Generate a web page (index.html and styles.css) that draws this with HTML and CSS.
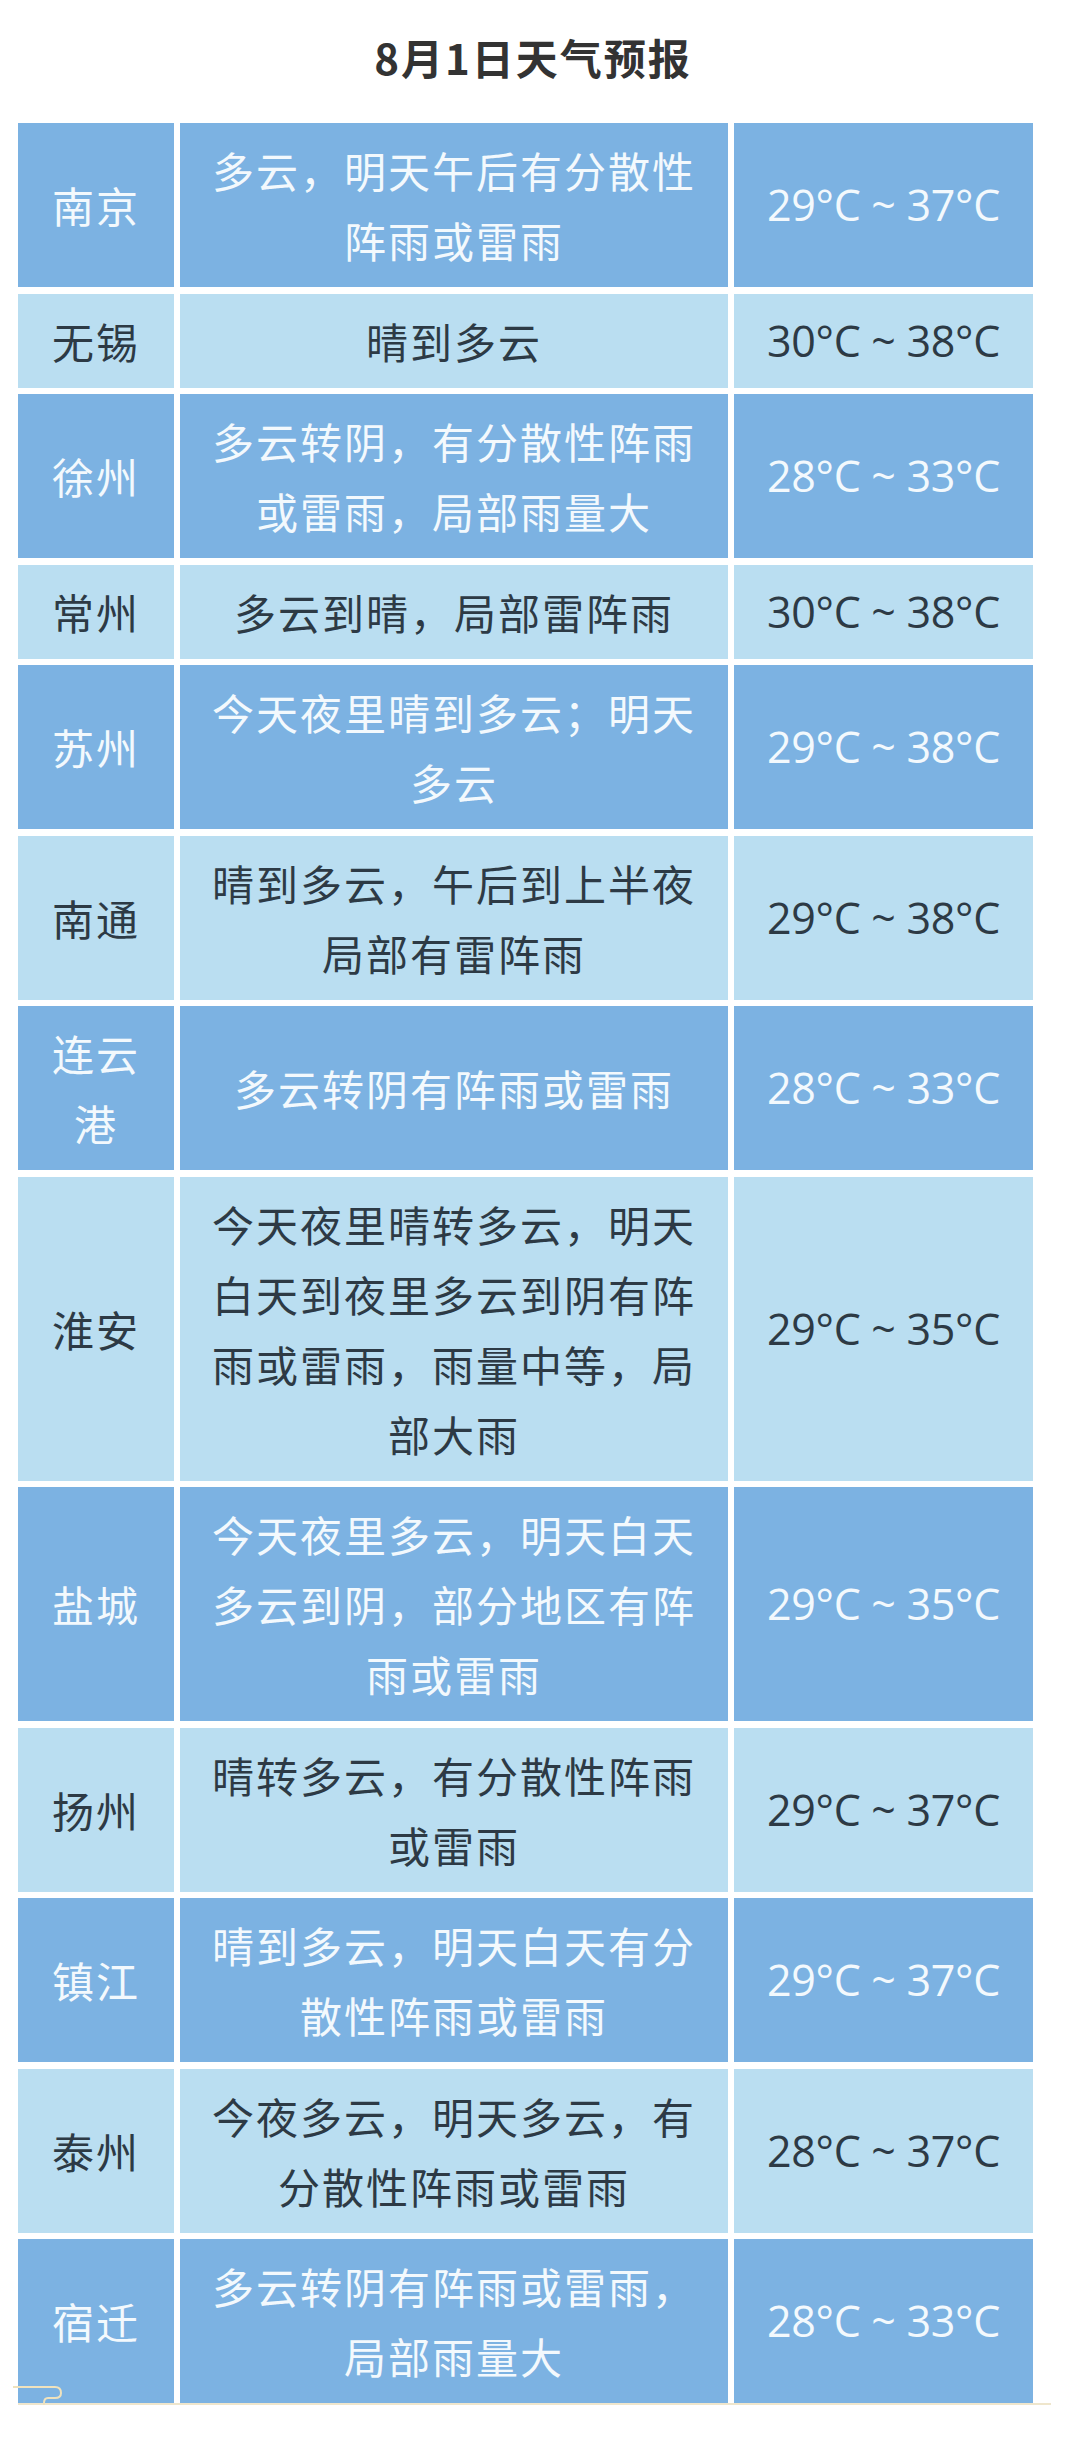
FILE: index.html
```html
<!DOCTYPE html>
<html lang="zh-CN">
<head>
<meta charset="utf-8">
<title>8月1日天气预报</title>
<link rel="stylesheet" href="styles.css">
</head>
<body>
<div class="page">
  <h1 class="title">8月1日天气预报</h1>
  <div class="table-wrap">
    <div class="table">
      <div class="row dark"><div class="cell name">南京</div><div class="cell desc">多云，明天午后有分散性阵雨或雷雨</div><div class="cell temp">29°C ~ 37°C</div></div>
      <div class="row light"><div class="cell name">无锡</div><div class="cell desc">晴到多云</div><div class="cell temp">30°C ~ 38°C</div></div>
      <div class="row dark"><div class="cell name">徐州</div><div class="cell desc">多云转阴，有分散性阵雨或雷雨，局部雨量大</div><div class="cell temp">28°C ~ 33°C</div></div>
      <div class="row light"><div class="cell name">常州</div><div class="cell desc">多云到晴，局部雷阵雨</div><div class="cell temp">30°C ~ 38°C</div></div>
      <div class="row dark"><div class="cell name">苏州</div><div class="cell desc">今天夜里晴到多云；明天多云</div><div class="cell temp">29°C ~ 38°C</div></div>
      <div class="row light"><div class="cell name">南通</div><div class="cell desc">晴到多云，午后到上半夜局部有雷阵雨</div><div class="cell temp">29°C ~ 38°C</div></div>
      <div class="row dark"><div class="cell name">连云港</div><div class="cell desc">多云转阴有阵雨或雷雨</div><div class="cell temp">28°C ~ 33°C</div></div>
      <div class="row light"><div class="cell name">淮安</div><div class="cell desc">今天夜里晴转多云，明天白天到夜里多云到阴有阵雨或雷雨，雨量中等，局部大雨</div><div class="cell temp">29°C ~ 35°C</div></div>
      <div class="row dark"><div class="cell name">盐城</div><div class="cell desc">今天夜里多云，明天白天多云到阴，部分地区有阵雨或雷雨</div><div class="cell temp">29°C ~ 35°C</div></div>
      <div class="row light"><div class="cell name">扬州</div><div class="cell desc">晴转多云，有分散性阵雨或雷雨</div><div class="cell temp">29°C ~ 37°C</div></div>
      <div class="row dark"><div class="cell name">镇江</div><div class="cell desc">晴到多云，明天白天有分散性阵雨或雷雨</div><div class="cell temp">29°C ~ 37°C</div></div>
      <div class="row light"><div class="cell name">泰州</div><div class="cell desc">今夜多云，明天多云，有分散性阵雨或雷雨</div><div class="cell temp">28°C ~ 37°C</div></div>
      <div class="row dark"><div class="cell name">宿迁</div><div class="cell desc">多云转阴有阵雨或雷雨，局部雨量大</div><div class="cell temp">28°C ~ 33°C</div></div>
    </div>
    <svg class="deco" width="60" height="24" viewBox="0 0 60 24" aria-hidden="true">
      <path d="M0 4 H42 Q48 4 48 10 Q48 15 42 15 H35 Q31 15 31 20 L31 22" fill="none" stroke="#efe2bd" stroke-width="2"/>
    </svg>
    <div class="baseline"></div>
  </div>
</div>
</body>
</html>
```
FILE: styles.css
```css
html, body {
  margin: 0;
  padding: 0;
  background: #ffffff;
}

.page {
  width: 1066px;
  padding-bottom: 56px;
}

.title {
  margin: 0;
  padding: 32px 0 41px;
  text-align: center;
  font-family: "Noto Sans CJK SC", "Noto Sans", sans-serif;
  font-weight: 700;
  font-size: 42px;
  line-height: 50px;
  letter-spacing: 2px;
  color: #333333;
}

.table-wrap {
  position: relative;
  margin-left: 18px;
  width: 1015px;
}

.table {
  display: grid;
  grid-template-columns: 156px 548px 299px;
  column-gap: 6px;
  row-gap: 6.5px;
}

.row {
  display: contents;
}

.cell {
  display: flex;
  align-items: center;
  justify-content: center;
  text-align: center;
  padding: 12px 15px;
  font-family: "Noto Sans CJK SC", "Noto Sans", sans-serif;
  font-size: 42px;
  line-height: 70px;
  letter-spacing: 2px;
}

.cell.desc {
  padding: 12px 24px;
}

.cell.temp {
  padding: 12px 8px;
  font-family: "Open Sans", "Noto Sans", sans-serif;
  font-size: 43px;
  letter-spacing: -0.3px;
}

.row.dark > .cell {
  background: #7cb2e2;
  color: #f3f9fd;
}

.row.light > .cell {
  background: #badef1;
  color: #2d3a45;
}

.deco {
  position: absolute;
  left: -5px;
  bottom: -2px;
}

.baseline {
  height: 2px;
  margin-right: -18px;
  background: #efe6cc;
}
```
